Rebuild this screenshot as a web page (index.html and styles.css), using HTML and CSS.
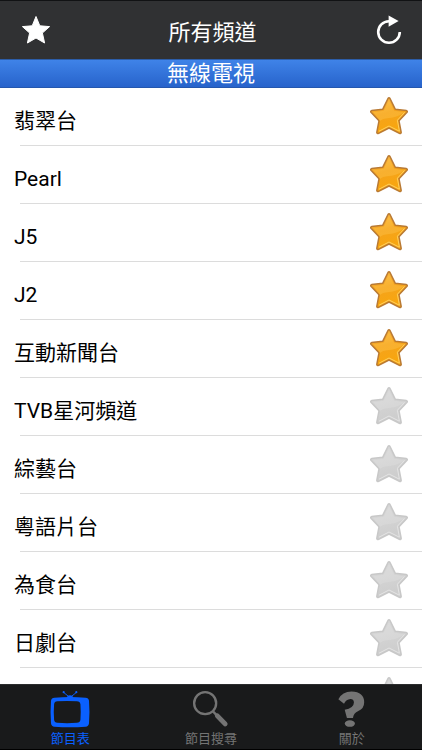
FILE: index.html
```html
<!DOCTYPE html>
<html lang="zh-Hant">

<head>
  <meta charset="utf-8">
  <meta name="viewport" content="width=device-width, initial-scale=1">
  <title>所有頻道</title>
  <link rel="stylesheet" href="styles.css">
</head>

<body>
  <!-- shared star shape and gradients -->
  <svg class="defs" width="0" height="0" aria-hidden="true">
    <defs>
      <linearGradient id="gold" x1="0" y1="0" x2="0.3" y2="1">
        <stop offset="0" stop-color="#fbbe4a"/>
        <stop offset="0.5" stop-color="#f5a31c"/>
        <stop offset="1" stop-color="#f8a60e"/>
      </linearGradient>
      <linearGradient id="silver" x1="0" y1="0" x2="0.3" y2="1">
        <stop offset="0" stop-color="#dadada"/>
        <stop offset="1" stop-color="#cdcdcd"/>
      </linearGradient>
    </defs>
    <symbol id="star" viewBox="0 0 40 40">
      <path class="star-body" d="M19 2.5 Q20 1 21 2.5 L26.2 13.2 L37.4 14.6 Q39 15.2 37.8 16.6 L30 24.8 L32.2 36.4 Q32 38 30.4 37.4 L20 32 L9.6 37.4 Q8 38 7.800 36.4 L10 24.8 L2.2 16.6 Q1 15.2 2.6 14.6 L13.800 13.2 Z"/>
      <path class="star-shine" d="M20 4.4 L25.2 14.8 L35.6 16.2 Q28 21.5 20 22 Q13 22.500 11 25 L4.400 16.2 L14.8 14.8 Z"/>
      <path class="star-edge" d="M35.600 16.4 L28.4 24.2 L30.4 35.200 L20 30 L10 35.2"/>
    </symbol>
  </svg>

  <header class="navbar">
    <button class="nav-button" type="button" aria-label="最愛">
      <svg width="30" height="30" viewBox="0 0 30 30">
        <path fill="#fff" stroke="#fff" stroke-linejoin="round" d="M15 1.5 L18.8 10.8 L28.6 11.6 L21.4 18 L23.6 28 L15 23 L6.4 28 L8.6 18 L1.4 11.6 L11.2 10.8 Z"/>
      </svg>
    </button>
    <h1>所有頻道</h1>
    <button class="nav-button" type="button" aria-label="重新整理">
      <svg width="30" height="30" viewBox="0 0 30 30">
        <path fill="none" stroke="#fff" stroke-width="2.6" d="M15 6.2 A10.8 10.8 0 1 0 25.8 17"/>
        <path fill="#fff" d="M14.6 0.4 L24.6 6 L14.6 11.8 Z"/>
      </svg>
    </button>
  </header>

  <main class="channels">
    <h2>無線電視</h2>
    <ul>
      <li><a href="#">翡翠台</a><button class="fav on" type="button" aria-label="翡翠台"><svg><use href="#star"/></svg></button></li>
      <li><a href="#">Pearl</a><button class="fav on" type="button" aria-label="Pearl"><svg><use href="#star"/></svg></button></li>
      <li><a href="#">J5</a><button class="fav on" type="button" aria-label="J5"><svg><use href="#star"/></svg></button></li>
      <li><a href="#">J2</a><button class="fav on" type="button" aria-label="J2"><svg><use href="#star"/></svg></button></li>
      <li><a href="#">互動新聞台</a><button class="fav on" type="button" aria-label="互動新聞台"><svg><use href="#star"/></svg></button></li>
      <li><a href="#">TVB星河頻道</a><button class="fav" type="button" aria-label="TVB星河頻道"><svg><use href="#star"/></svg></button></li>
      <li><a href="#">綜藝台</a><button class="fav" type="button" aria-label="綜藝台"><svg><use href="#star"/></svg></button></li>
      <li><a href="#">粵語片台</a><button class="fav" type="button" aria-label="粵語片台"><svg><use href="#star"/></svg></button></li>
      <li><a href="#">為食台</a><button class="fav" type="button" aria-label="為食台"><svg><use href="#star"/></svg></button></li>
      <li><a href="#">日劇台</a><button class="fav" type="button" aria-label="日劇台"><svg><use href="#star"/></svg></button></li>
      <li><button class="fav" type="button" aria-label="最愛"><svg><use href="#star"/></svg></button></li>
    </ul>
  </main>

  <nav class="tabbar">
    <a class="tab active" href="#">
      <svg width="42" height="40" viewBox="0 0 42 40">
        <path fill="none" stroke="currentColor" d="M14.5 2.5 L20 7 M27.5 2.5 L22 7"/>
        <circle cx="14.5" cy="2.2" r="1.1" fill="currentColor"/>
        <circle cx="27.5" cy="2.2" r="1.1" fill="currentColor"/>
        <path fill="currentColor" d="M17.5 8.500 Q18 5.5 21 5.5 Q24 5.5 24.5 8.5 Z"/>
        <path fill="currentColor" fill-rule="evenodd" d="M5 8 Q21 6.6 37 8 Q40 8.2 40.5 11 Q41.4 22 40.5 34 Q40 37.200 37 37.6 Q21 39 5 37.6 Q2 37.2 1.5 34 Q0.6 22 1.5 11 Q2 8.2 5 8 Z M8 11.6 Q5 11.8 4.7 14.6 Q4 22 4.7 30.400 Q5 33.4 8 33.6 Q18 34.4 28 33.6 Q31.3 33.4 31.7 30.4 Q32.3 22 31.7 14.6 Q31.3 11.8 28 11.6 Q18 10.9 8 11.6 Z"/>
      </svg>
      <span>節目表</span>
    </a>
    <a class="tab" href="#">
      <svg width="42" height="40" viewBox="0 0 42 40">
        <circle cx="15" cy="13.5" r="11.3" fill="none" stroke="currentColor" stroke-width="2.4"/>
        <path stroke="currentColor" stroke-width="2.5" d="M22.5 21.5 L27 26"/>
        <path stroke="currentColor" stroke-width="5" stroke-linecap="round" d="M27.5 26.5 L35.5 34.8"/>
      </svg>
      <span>節目搜尋</span>
    </a>
    <a class="tab" href="#">
      <svg width="42" height="40" viewBox="0 0 42 40">
        <path fill="currentColor" d="M7 9.500 Q11 1.5 20.5 1.5 Q33.500 2 33.5 12.5 Q33.5 19 27.500 21.5 Q22.500 23.500 22 28.8 L15.8 28.8 L13.500 20.2 Q23 18.5 23 12.5 Q22.500 9.2 19.5 9.2 Q15 9.5 12.8 14 Z"/>
        <ellipse cx="18.8" cy="34.4" rx="5.2" ry="3.400" fill="currentColor"/>
      </svg>
      <span>關於</span>
    </a>
  </nav>
</body>

</html>
```
FILE: styles.css
```css
* {
  box-sizing: border-box;
}

body {
  margin: 0;
  height: 100vh;
  display: flex;
  flex-direction: column;
  background: #fff;
  color: #000;
  font-family: Roboto, "Noto Sans CJK TC", sans-serif;
}

a {
  color: inherit;
  text-decoration: none;
}

button {
  padding: 0;
  border: 0;
  background: none;
}

svg {
  display: block;
}

.defs {
  position: absolute;
}

.navbar {
  flex: none;
  display: flex;
  align-items: center;
  justify-content: space-between;
  height: 59px;
  padding: 0 18px 0 21px;
  border-top: 1px solid #111214;
  background: #303133;
  color: #fff;
}

h1,
h2 {
  margin: 0;
  font-size: 22px;
  font-weight: 400;
  text-align: center;
}

.channels {
  flex: 1;
  min-height: 0;
  overflow: hidden;
}

h2 {
  height: 29px;
  line-height: 27px;
  border-top: 1px solid #2c5da9;
  border-bottom: 1px solid #2457ae;
  background: linear-gradient(#3f83e8, #2763cb);
  color: #fff;
}

ul {
  margin: 0;
  padding: 0;
  list-style: none;
}

li {
  display: flex;
  justify-content: flex-end;
  height: 58px;
  margin-left: 20px;
  padding-right: 13px;
  border-bottom: 1px solid #dcdcdc;
}

li a {
  flex: 1;
  margin-left: -6px;
  padding-top: 8px;
  font-size: 21px;
  line-height: 50px;
}

.fav {
  align-self: flex-start;
  padding-top: 8px;
}

.fav svg {
  width: 40px;
  height: 40px;
  fill: url(#silver);
  stroke: #c8c8c8;
  stroke-linejoin: round;
  color: #e4e4e4;
}

.fav.on svg {
  fill: url(#gold);
  stroke: #b97a34;
  color: #ffd060;
}

.star-body {
  stroke-width: 1.5px;
}

.star-shine {
  fill: currentColor;
  fill-opacity: 0.3;
  stroke: none;
}

.star-edge {
  fill: none;
  stroke: currentColor;
}

.tabbar {
  flex: none;
  display: flex;
  height: 66px;
  padding-top: 5px;
  border-top: 1px solid #2c2d2e;
  border-bottom: 1px solid #000;
  background: #191a1b;
  color: #747474;
}

.tab {
  flex: 1;
  display: flex;
  flex-direction: column;
  align-items: center;
  font-size: 13px;
  line-height: 20px;
}

.active {
  color: #0a60ff;
}
```
